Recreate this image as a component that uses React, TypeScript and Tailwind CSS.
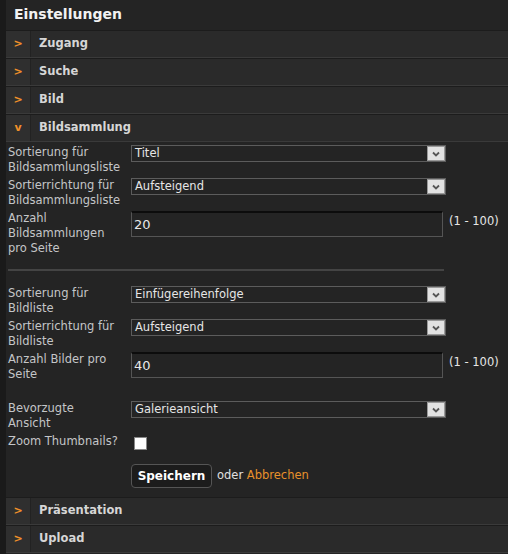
import React from "react";

const font = "font-['DejaVu_Sans','Verdana',sans-serif]";

function Header({ label, open = false }: { label: string; open?: boolean }) {
  return (
    <div className="flex h-[28px] border-t border-[#1c1c1c] border-b border-b-[#3a3a3a] bg-[#2a2a2a]">
      <div className="flex w-[25px] items-center justify-center border-r border-[#222] bg-[#2f2f2f] text-[11px] font-bold text-[#f0902a]">
        {open ? "v" : ">"}
      </div>
      <div className="ml-[8px] flex items-center text-[11.5px] font-bold text-[#d6d6d6]">{label}</div>
    </div>
  );
}

function Select({ value }: { value: string }) {
  return (
    <div className="flex h-[17px] w-[315px] border border-[#5c5c5c] bg-[#242424]">
      <div className="flex-1 pl-[3px] text-[11.5px] leading-[15px] text-[#e6e6e6]">{value}</div>
      <div className="flex w-[18px] items-center justify-center border border-[#999] bg-[#e2e2e2]">
        <svg width="8" height="6" viewBox="0 0 8 6">
          <path d="M1 1.5 L4 4.5 L7 1.5" fill="none" stroke="#555" strokeWidth="1.8" />
        </svg>
      </div>
    </div>
  );
}

function NumberInput({ value }: { value: string }) {
  return (
    <div className="flex items-start">
      <div className="flex h-[26px] w-[312px] items-center border border-[#555] border-t-2 border-t-[#0c0c0c] bg-[#242424] pl-[2px] text-[13px] text-[#e8e8e8]">
        {value}
      </div>
      <span className="ml-[6px] mt-[3px] text-[11.5px] leading-[15px] text-[#e6e6e6]">(1 - 100)</span>
    </div>
  );
}

function Row({ label, children, className = "" }: { label: React.ReactNode; children: React.ReactNode; className?: string }) {
  return (
    <div className={"flex items-start " + className}>
      <div className="w-[123px] text-[11.5px] leading-[15px] text-[#c4c6c8]">{label}</div>
      {children}
    </div>
  );
}

export default function App() {
  return (
    <div className={"flex min-h-screen bg-[#242424] " + font}>
      <div className="w-[6px] shrink-0 bg-[#1a1a1a]" />
      <div className="flex-1">
        <div className="h-[30px] pl-[8px] pt-[4px] text-[14px] font-bold leading-[20px] text-[#f2f2f2]">
          Einstellungen
        </div>
        <Header label="Zugang" />
        <Header label="Suche" />
        <Header label="Bild" />
        <Header label="Bildsammlung" open />

        <div className="pl-[2px] pt-[3px]">
          <Row label={<>Sortierung für<br />Bildsammlungsliste</>} className="h-[33px]">
            <Select value="Titel" />
          </Row>
          <Row label={<>Sortierrichtung für<br />Bildsammlungsliste</>} className="h-[33px]">
            <Select value="Aufsteigend" />
          </Row>
          <Row label={<>Anzahl<br />Bildsammlungen<br />pro Seite</>}>
            <NumberInput value="20" />
          </Row>

          <div className="mt-[13px] h-[2px] w-[436px] bg-[#444]" />

          <Row label={<>Sortierung für<br />Bildliste</>} className="mt-[15px] h-[33px]">
            <Select value="Einfügereihenfolge" />
          </Row>
          <Row label={<>Sortierrichtung für<br />Bildliste</>} className="h-[33px]">
            <Select value="Aufsteigend" />
          </Row>
          <Row label={<>Anzahl Bilder pro<br />Seite</>} className="h-[49px]">
            <NumberInput value="40" />
          </Row>
          <Row label={<>Bevorzugte<br />Ansicht</>} className="h-[33px]">
            <Select value="Galerieansicht" />
          </Row>
          <Row label="Zoom Thumbnails?" className="h-[15px]">
            <div className="ml-[3px] mt-[3px] h-[13px] w-[13px] border border-[#888] bg-white" />
          </Row>

          <div className="ml-[123px] mt-[15px] flex items-center">
            <button className="h-[24px] w-[81px] rounded-[4px] border border-[#555] bg-[#1c1c1c] text-[12px] font-bold text-white">
              Speichern
            </button>
            <span className="ml-[5px] text-[11.5px] text-[#e0e0e0]">
              oder <span className="text-[#e8912b]">Abbrechen</span>
            </span>
          </div>
        </div>

        <div className="mt-[9px]">
          <Header label="Präsentation" />
          <Header label="Upload" />
        </div>
      </div>
    </div>
  );
}
